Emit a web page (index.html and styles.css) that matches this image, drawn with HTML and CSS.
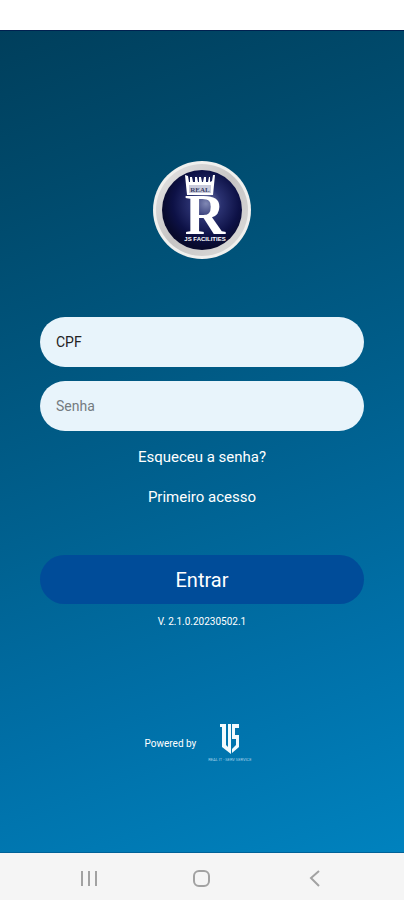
FILE: index.html
```html
<!DOCTYPE html>
<html lang="pt-BR">
<head>
    <meta charset="UTF-8">
    <meta name="viewport" content="width=device-width, initial-scale=1.0">
    <title>Real JS Facilities</title>
    <link rel="stylesheet" href="styles.css">
</head>
<body>

<div class="status-bar"></div>

<main class="login">
    <svg class="logo" viewBox="0 0 98 98" role="img" aria-label="Real JS Facilities">
        <defs>
            <linearGradient id="ring" x1="0" y1="0" x2="1" y2="1">
                <stop offset="0" stop-color="#e6e6e6"/>
                <stop offset="0.5" stop-color="#c6c4c4"/>
                <stop offset="1" stop-color="#dededc"/>
            </linearGradient>
            <radialGradient id="disc" cx="0.55" cy="0.42" r="0.55">
                <stop offset="0" stop-color="#8088b4"/>
                <stop offset="0.35" stop-color="#2a3170"/>
                <stop offset="0.75" stop-color="#0d1146"/>
                <stop offset="1" stop-color="#080a2c"/>
            </radialGradient>
        </defs>
        <circle cx="49" cy="49" r="49" fill="#f0f0ee"/>
        <circle cx="49" cy="49" r="46" fill="url(#ring)"/>
        <circle cx="49" cy="49" r="40" fill="url(#disc)"/>
        <path d="M34 34 L32 14 L35 15 L36 21 L37 21 L37 16 L39 16 L40 21 L42 21 L42 16 L44 16 L45 21 L46 21 L46 16 L48 16 L49 21 L50 21 L51 16 L53 16 L53 21 L55 21 L56 16 L57 16 L57 21 L59 20 L60 14 L62 14 L60 34 Z" fill="#fff"/>
        <path d="M36 24H58V32H36Z" fill="#c9cbdc"/>
        <text class="logo-real" x="47" y="31" text-anchor="middle">REAL</text>
        <text class="logo-r" x="52" y="73" text-anchor="middle">R</text>
        <text class="logo-name" x="52" y="80" text-anchor="middle">JS FACILITIES</text>
    </svg>

    <form class="form">
        <input class="field field-cpf" type="text" placeholder="CPF" aria-label="CPF">
        <input class="field" type="password" placeholder="Senha" aria-label="Senha">
        <a class="link" href="#">Esqueceu a senha?</a>
        <a class="link" href="#">Primeiro acesso</a>
        <button class="submit" type="submit">Entrar</button>
    </form>

    <p class="version">V. 2.1.0.20230502.1</p>

    <div class="powered">
        <span>Powered by</span>
        <div class="partner">
            <svg class="partner-mark" viewBox="0 0 20 30" aria-hidden="true">
                <path d="M0 0H6V21L8 23V0H11V30L2 23V3H0Z M12 0H19V4H15V11H19V23L12 29V25L16 21V15H12Z" fill="#f2fafd"/>
            </svg>
            <span class="partner-name">REAL IT - SERV SERVICE</span>
        </div>
    </div>
</main>

<nav class="nav-bar">
    <button class="nav-button" aria-label="Recentes">
        <svg viewBox="0 0 18 18"><path d="M2 1V16M9 1V16M16 1V16"/></svg>
    </button>
    <button class="nav-button" aria-label="Início">
        <svg viewBox="0 0 18 18"><rect x="1" y="1" width="15" height="15" rx="5"/></svg>
    </button>
    <button class="nav-button" aria-label="Voltar">
        <svg viewBox="0 0 18 18"><path d="M13 1L5 8L13 16"/></svg>
    </button>
</nav>

</body>
</html>
```

FILE: styles.css
```css
* {
    box-sizing: border-box;
}
body {
    font-family: Roboto, sans-serif;
    display: flex;
    flex-direction: column;
    min-height: 100vh;
    margin: 0;
    color: #fff;
    background: #fff;
}
.status-bar {
    height: 30px;
}
.login {
    flex: 1;
    display: flex;
    flex-direction: column;
    align-items: center;
    padding: 130px 40px 0;
    background: linear-gradient(160deg, #003f5c 0%, #004a6c 18%, #005c88 46%, #0070a8 76%, #0082be 100%);
    border-top: 1px solid #002050;
    border-bottom: 1px solid #006298;
}
.logo {
    width: 98px;
    height: 98px;
}
.logo-real {
    font: bold 7px "Liberation Serif", serif;
    fill: #3a3f66;
}
.logo-r {
    font: bold 56px "Liberation Serif", serif;
    fill: #fff;
}
.logo-name {
    font: bold 6px "Liberation Sans", sans-serif;
    fill: #fff;
}
.form {
    display: flex;
    flex-direction: column;
    align-items: center;
    width: 100%;
    margin-top: 58px;
}
.field {
    width: 100%;
    height: 50px;
    margin-bottom: 14px;
    padding: 0 16px;
    border: none;
    border-radius: 25px;
    background: #e8f4fb;
    font-family: inherit;
    font-size: 14px;
    color: #222;
}
.field::placeholder {
    color: #747b80;
    opacity: 1;
}
.field-cpf::placeholder {
    color: #222;
}
.link {
    margin-bottom: 16px;
    font-size: 15px;
    line-height: 24px;
    color: #fff;
    text-decoration: none;
}
.submit {
    width: 100%;
    height: 49px;
    margin-top: 30px;
    border: none;
    border-radius: 25px;
    background: #004c99;
    font-family: inherit;
    font-size: 20px;
    color: #fff;
    cursor: pointer;
}
.version {
    margin: 10px 0 0;
    font-size: 10px;
    line-height: 16px;
}
.powered {
    display: flex;
    align-items: center;
    gap: 12px;
    margin-top: 94px;
    padding-right: 8px;
    font-size: 10px;
}
.partner {
    display: flex;
    flex-direction: column;
    align-items: center;
    gap: 4px;
}
.partner-mark {
    width: 20px;
    height: 30px;
}
.partner-name {
    font-size: 4px;
    line-height: 4px;
    color: #a5d3ea;
}
.nav-bar {
    display: flex;
    justify-content: space-around;
    align-items: center;
    height: 47px;
    padding: 4px 32px 0;
    background: #f5f5f5;
}
.nav-button {
    display: flex;
    padding: 0;
    border: none;
    background: none;
    cursor: pointer;
}
.nav-button svg {
    width: 18px;
    height: 18px;
    fill: none;
    stroke: #a2a2a2;
    stroke-width: 2;
}
```
